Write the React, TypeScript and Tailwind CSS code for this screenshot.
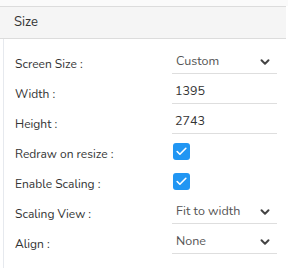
import { ChevronDown, Check } from "lucide-react";

const font = { fontFamily: '"Nunito", Lato, "Open Sans", sans-serif' };

function SelectCell({ value }: { value: string }) {
    return (
        <div className="h-[30px] w-[105px] border-b border-[#dedede] flex items-center pt-[6px] pl-[4px] pr-[5px] justify-between">
            <span className="text-[12.5px] text-[#555]">{value}</span>
            <ChevronDown className="w-[14px] h-[14px] text-[#444]" strokeWidth={3.4} />
        </div>
    );
}

function InputCell({ value }: { value: string }) {
    return (
        <div className="h-[30px] w-[105px] border-b border-[#dedede] flex items-center pt-[6px] pl-[3px]">
            <span className="text-[12.5px] text-[#333]">{value}</span>
        </div>
    );
}

function CheckCell() {
    return (
        <div className="h-[30px] flex items-center pt-[5px] pl-[1px]">
            <div className="w-[17px] h-[17px] rounded-[3px] bg-[#2196f3] flex items-center justify-center">
                <Check className="w-[13px] h-[13px] text-white" strokeWidth={3} />
            </div>
        </div>
    );
}

function Row({ label, children }: { label: string; children: React.ReactNode }) {
    return (
        <div className="flex items-center h-[30px]">
            <div className="w-[157px] pt-[10px] text-[12px] text-[#333]">{label}</div>
            {children}
        </div>
    );
}

export default function App() {
    return (
        <div className="w-[288px] h-[271px] bg-white overflow-hidden" style={font}>
            <div className="h-[6px] bg-[#fafafa]" />
            <div className="w-[286px] h-[33px] bg-[#f5f5f5] border-y border-[#dcdcdc] flex items-center pl-[14px]">
                <span className="text-[13px] text-[#333]">Size</span>
            </div>
            <div className="ml-[3px] border-l border-[#e6e9ee] pl-[11px] pt-[5px] pb-[14px]">
                <Row label="Screen Size :">
                    <SelectCell value="Custom" />
                </Row>
                <Row label="Width :">
                    <InputCell value="1395" />
                </Row>
                <Row label="Height :">
                    <InputCell value="2743" />
                </Row>
                <Row label="Redraw on resize :">
                    <CheckCell />
                </Row>
                <Row label="Enable Scaling :">
                    <CheckCell />
                </Row>
                <Row label="Scaling View :">
                    <SelectCell value="Fit to width" />
                </Row>
                <Row label="Align :">
                    <SelectCell value="None" />
                </Row>
            </div>
        </div>
    );
}
